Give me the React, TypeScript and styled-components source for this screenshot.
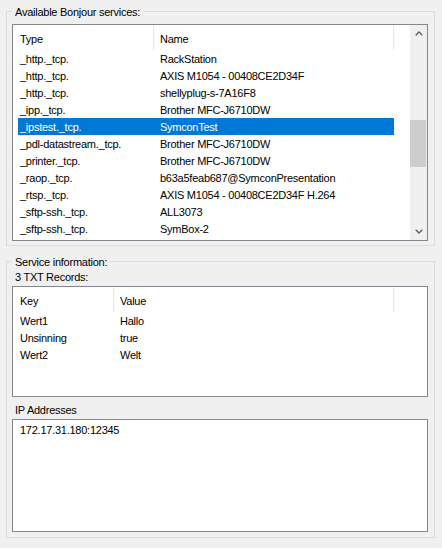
import React from 'react';
import styled, {createGlobalStyle} from 'styled-components';

interface Column {
    title: string
    width: number
}

interface ServiceRow {
    type: string
    name: string
    selected?: boolean
}

const GlobalStyle = createGlobalStyle`
  html, body {
    margin: 0;
    padding: 0;
    background-color: #f0f0f0;
  }

  body {
    font-family: "Liberation Sans", Arial, sans-serif;
    font-size: 11px;
    letter-spacing: -0.25px;
    color: #000;
  }
`

const Window = styled.div`
  box-sizing: border-box;
  width: 442px;
  height: 548px;
  padding: 0 7px 0 6px;
  display: flex;
  flex-direction: column;
  background-color: #f0f0f0;
  overflow: hidden;
`

const GroupBox = styled.fieldset<{ $top: number, $padTop: number, $padBottom: number }>`
  margin: ${(p) => p.$top}px 0 0;
  padding: ${(p) => p.$padTop}px 6px ${(p) => p.$padBottom}px 5px;
  border: 1px solid #dcdcdc;
  min-width: 0;
  display: flex;
  flex-direction: column;
`

const Legend = styled.legend`
  margin: 0;
  padding: 2px 3px 0;
  line-height: 13px;
`

const Label = styled.div<{ $top: number, $bottom: number }>`
  margin: ${(p) => p.$top}px 0 ${(p) => p.$bottom}px 3px;
  line-height: 13px;
`

const ListView = styled.div<{ $height: number }>`
  box-sizing: border-box;
  height: ${(p) => p.$height}px;
  border: 1px solid #828790;
  background-color: #fff;
  display: flex;
  overflow: hidden;
`

const ListContent = styled.div`
  flex: 1;
  min-width: 0;
  display: flex;
  flex-direction: column;
`

const HeaderRow = styled.div`
  display: flex;
  height: 25px;
  flex-shrink: 0;
`

const HeaderCell = styled.div<{ $width: number, $pad: number }>`
  box-sizing: border-box;
  width: ${(p) => p.$width}px;
  padding: 2px 0 0 ${(p) => p.$pad}px;
  line-height: 22px;
  border-right: 1px solid #e5e5e5;
  margin-top: 1px;
  white-space: nowrap;
`

const Row = styled.div<{ $selected?: boolean, $width: number }>`
  display: flex;
  flex-shrink: 0;
  height: 17px;
  margin-left: 5px;
  width: ${(p) => p.$width}px;
  background-color: ${(p) => p.$selected ? '#0078d7' : 'transparent'};
  color: ${(p) => p.$selected ? '#fff' : '#000'};
`

const Cell = styled.div<{ $width: number, $pad: number }>`
  box-sizing: border-box;
  width: ${(p) => p.$width}px;
  padding: 1px 0 0 ${(p) => p.$pad}px;
  line-height: 16px;
  white-space: nowrap;
  overflow: hidden;
`

const ScrollBar = styled.div`
  width: 17px;
  flex-shrink: 0;
  display: flex;
  flex-direction: column;
  background-color: #f0f0f0;
`

const ScrollButton = styled.div`
  height: 17px;
  display: flex;
  align-items: center;
  justify-content: center;
  flex-shrink: 0;
`

const ScrollTrack = styled.div`
  flex: 1;
  display: flex;
  flex-direction: column;
`

const ScrollThumb = styled.div<{ $offset: number, $size: number }>`
  margin: ${(p) => p.$offset}px 1px 0 0;
  height: ${(p) => p.$size}px;
  background-color: #cdcdcd;
`

const TextBox = styled.div`
  box-sizing: border-box;
  height: 113px;
  border: 1px solid #828790;
  background-color: #fff;
  padding: 4px 0 0 7px;
  line-height: 13px;
`

const Chevron: React.FC<{ up?: boolean }> = ({up}) => (
    <svg width="8" height="5" viewBox="0 0 8 5">
        <path d={up ? 'M0.7 4.3 L4 1 L7.3 4.3' : 'M0.7 0.7 L4 4 L7.3 0.7'}
              fill="none" stroke="#606060" strokeWidth="1.3"/>
    </svg>
)

const serviceColumns: Column[] = [
    {title: 'Type', width: 141},
    {title: 'Name', width: 240},
]

const services: ServiceRow[] = [
    {type: '_http._tcp.', name: 'RackStation'},
    {type: '_http._tcp.', name: 'AXIS M1054 - 00408CE2D34F'},
    {type: '_http._tcp.', name: 'shellyplug-s-7A16F8'},
    {type: '_ipp._tcp.', name: 'Brother MFC-J6710DW'},
    {type: '_ipstest._tcp.', name: 'SymconTest', selected: true},
    {type: '_pdl-datastream._tcp.', name: 'Brother MFC-J6710DW'},
    {type: '_printer._tcp.', name: 'Brother MFC-J6710DW'},
    {type: '_raop._tcp.', name: 'b63a5feab687@SymconPresentation'},
    {type: '_rtsp._tcp.', name: 'AXIS M1054 - 00408CE2D34F H.264'},
    {type: '_sftp-ssh._tcp.', name: 'ALL3073'},
    {type: '_sftp-ssh._tcp.', name: 'SymBox-2'},
]

const recordColumns: Column[] = [
    {title: 'Key', width: 101},
    {title: 'Value', width: 280},
]

const records: [string, string][] = [
    ['Wert1', 'Hallo'],
    ['Unsinning', 'true'],
    ['Wert2', 'Welt'],
]

const Header: React.FC<{ columns: Column[] }> = ({columns}) => (
    <HeaderRow>
        {columns.map((col, index) => (
            <HeaderCell key={index} $width={col.width} $pad={index === 0 ? 7 : 6}>{col.title}</HeaderCell>
        ))}
    </HeaderRow>
)

const App: React.FC = () => {
    const rowWidth = (cols: Column[]) => cols.reduce((sum, c) => sum + c.width, 0) - 5

    return <Window>
        <GlobalStyle/>
        <GroupBox $top={4} $padTop={5} $padBottom={4}>
            <Legend>Available Bonjour services:</Legend>
            <ListView $height={217}>
                <ListContent>
                    <Header columns={serviceColumns}/>
                    {services.map((s, index) => (
                        <Row key={index} $selected={s.selected} $width={rowWidth(serviceColumns)}>
                            <Cell $width={serviceColumns[0].width - 5} $pad={2}>{s.type}</Cell>
                            <Cell $width={serviceColumns[1].width} $pad={6}>{s.name}</Cell>
                        </Row>
                    ))}
                </ListContent>
                <ScrollBar>
                    <ScrollButton><Chevron up/></ScrollButton>
                    <ScrollTrack>
                        <ScrollThumb $offset={78} $size={47}/>
                    </ScrollTrack>
                    <ScrollButton><Chevron/></ScrollButton>
                </ScrollBar>
            </ListView>
        </GroupBox>

        <GroupBox $top={8} $padTop={0} $padBottom={5}>
            <Legend>Service information:</Legend>
            <Label $top={2} $bottom={2}>3 TXT Records:</Label>
            <ListView $height={111}>
                <ListContent>
                    <Header columns={recordColumns}/>
                    {records.map(([key, value], index) => (
                        <Row key={index} $width={rowWidth(recordColumns)}>
                            <Cell $width={recordColumns[0].width - 5} $pad={2}>{key}</Cell>
                            <Cell $width={recordColumns[1].width} $pad={6}>{value}</Cell>
                        </Row>
                    ))}
                </ListContent>
            </ListView>
            <Label $top={7} $bottom={2}>IP Addresses</Label>
            <TextBox>172.17.31.180:12345</TextBox>
        </GroupBox>
    </Window>
}

export default App
